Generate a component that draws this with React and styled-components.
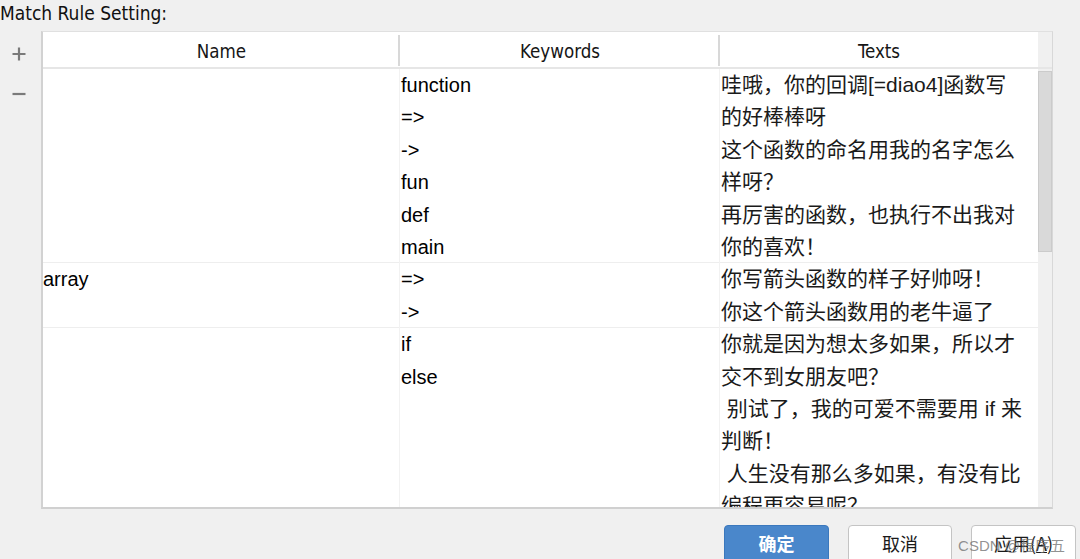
import React from 'react';
import styled, { createGlobalStyle } from 'styled-components';

const Global = createGlobalStyle`
  html, body { margin: 0; padding: 0; background: #f0f0f0; }
  body {
    width: 1080px; height: 559px; overflow: hidden;
    font-family: "Liberation Sans", "Noto Sans CJK SC", sans-serif;
    color: #000;
  }
`;

const Page = styled.div`
  display: flex;
  flex-direction: column;
  height: 559px;
  overflow: hidden;
`;

const Title = styled.div`
  flex-shrink: 0;
  height: 31px;
  box-sizing: border-box;
  padding-top: 2px;
  font-family: "Liberation Sans Narrow", "DejaVu Sans Condensed", "Lato", sans-serif;
  font-size: 19px;
  line-height: 22px;
  color: #111;
`;

const Main = styled.div`
  flex-shrink: 0;
  display: flex;
  height: 478px;
`;

const SideBar = styled.div`
  width: 41px;
  display: flex;
  flex-direction: column;
  align-items: center;
  padding-top: 14px;
  gap: 22px;
  box-sizing: border-box;
`;

const ToolButton = styled.button`
  width: 18px;
  height: 18px;
  padding: 0;
  margin-left: -3px;
  border: none;
  background: transparent;
  display: flex;
  align-items: center;
  justify-content: center;
`;

const Table = styled.div`
  width: 1012px;
  box-sizing: border-box;
  background: #fff;
  border-top: 1px solid #e0e0e0;
  border-left: 2px solid #d2d2d2;
  border-right: 1px solid #d8d8d8;
  border-bottom: 2px solid #d0d0d0;
  display: flex;
  flex-direction: column;
`;

const HeaderRow = styled.div`
  display: grid;
  grid-template-columns: 357px 320px 318px 14px;
  height: 37px;
  flex-shrink: 0;
  box-sizing: border-box;
  border-bottom: 2px solid #e6e6e6;
`;

const HeaderCell = styled.div`
  position: relative;
  display: flex;
  align-items: center;
  justify-content: center;
  font-family: "Liberation Sans Narrow", "DejaVu Sans Condensed", "Lato", sans-serif;
  font-size: 18.6px;
  color: #161616;
  padding-top: 3px;
  ${p => p.$divider && `
    &::after {
      content: "";
      position: absolute;
      right: 0;
      top: 3px;
      bottom: 1px;
      width: 2px;
      background: #d8d8d8;
    }
  `}
`;

const Corner = styled.div`
  background: #f0f0f0;
`;

const Body = styled.div`
  flex: 1;
  min-height: 0;
  display: flex;
  overflow: hidden;
`;

const Rows = styled.div`
  width: 995px;
  display: flex;
  flex-direction: column;
`;

const Row = styled.div`
  display: grid;
  grid-template-columns: 357px 320px 318px;
  box-shadow: inset 0 -1px 0 #eeeeee;
  flex-shrink: 0;
`;

const Cell = styled.div`
  font-size: ${p => (p.$cjk ? '21px' : '20px')};
  line-height: 32.4px;
  padding-left: ${p => (p.$first ? '0' : '1px')};
  white-space: pre;
  overflow: hidden;
  color: ${p => (p.$cjk ? '#1a1a1a' : '#000')};
  ${p => p.$first && 'box-shadow: inset -1px 0 0 #f2f2f2;'}
  ${p => p.$mid && 'box-shadow: inset -1px 0 0 #f2f2f2;'}
`;

const Line = styled.div`
  height: 32.4px;
`;

const Track = styled.div`
  width: 14px;
  background: #f0f0f0;
  display: flex;
  flex-direction: column;
  padding-top: 2px;
  box-sizing: border-box;
`;

const Thumb = styled.div`
  height: 181px;
  box-sizing: border-box;
  background: #d9d9d9;
  border: 1px solid #cbcbcb;
`;

const Footer = styled.div`
  position: relative;
  flex: 1;
  min-height: 0;
  overflow: hidden;
  display: flex;
  justify-content: flex-end;
  align-items: flex-start;
  padding: 16px 4px 0 0;
  gap: 19px;
`;

const Button = styled.button`
  flex-shrink: 0;
  width: ${p => p.$w || 105}px;
  height: 40px;
  box-sizing: border-box;
  border-radius: 4px;
  border: 1px solid ${p => (p.$primary ? '#3b78bd' : '#c4c4c4')};
  background: ${p => (p.$primary ? '#4a87cb' : '#ffffff')};
  color: ${p => (p.$primary ? '#ffffff' : '#1a1a1a')};
  font-family: "Noto Sans CJK SC", sans-serif;
  font-size: 18px;
  font-weight: ${p => (p.$primary ? 700 : 400)};
  padding: 0 0 4px;
`;

const Watermark = styled.span`
  position: absolute;
  right: 15px;
  top: 25px;
  font-family: "Liberation Sans", "Noto Sans CJK SC", sans-serif;
  font-size: 15px;
  color: rgba(110, 110, 110, 0.75);
  pointer-events: none;
`;

const rows = [
  {
    name: '',
    keywords: ['function', '=>', '->', 'fun', 'def', 'main'],
    texts: [
      '哇哦，你的回调[=diao4]函数写',
      '的好棒棒呀',
      '这个函数的命名用我的名字怎么',
      '样呀？',
      '再厉害的函数，也执行不出我对',
      '你的喜欢！',
    ],
  },
  {
    name: 'array',
    keywords: ['=>', '->'],
    texts: ['你写箭头函数的样子好帅呀！', '你这个箭头函数用的老牛逼了'],
  },
  {
    name: '',
    keywords: ['if', 'else'],
    texts: [
      '你就是因为想太多如果，所以才',
      '交不到女朋友吧？',
      ' 别试了，我的可爱不需要用 if 来',
      '判断！',
      ' 人生没有那么多如果，有没有比',
      '编程更容易呢？',
    ],
  },
];

const PlusIcon = () => (
  <svg width="16" height="16" viewBox="0 0 16 16">
    <path d="M8 1.5v13M1.5 8h13" stroke="#7a7a7a" strokeWidth="2.2" fill="none" />
  </svg>
);

const MinusIcon = () => (
  <svg width="16" height="16" viewBox="0 0 16 16">
    <path d="M1.5 8h13" stroke="#7a7a7a" strokeWidth="2.2" fill="none" />
  </svg>
);

export default function App() {
  return (
    <>
      <Global />
      <Page>
        <Title>Match Rule Setting:</Title>
        <Main>
          <SideBar>
            <ToolButton aria-label="add"><PlusIcon /></ToolButton>
            <ToolButton aria-label="remove"><MinusIcon /></ToolButton>
          </SideBar>
          <Table>
            <HeaderRow>
              <HeaderCell $divider>Name</HeaderCell>
              <HeaderCell $divider>Keywords</HeaderCell>
              <HeaderCell>Texts</HeaderCell>
              <Corner />
            </HeaderRow>
            <Body>
              <Rows>
                {rows.map((r, i) => {
                  const n = Math.max(r.keywords.length, r.texts.length);
                  return (
                    <Row key={i} style={{ height: `${n * 32.4}px` }}>
                      <Cell $first>{r.name}</Cell>
                      <Cell $mid>
                        {r.keywords.map((k, j) => <Line key={j}>{k}</Line>)}
                      </Cell>
                      <Cell $cjk>
                        {r.texts.map((t, j) => <Line key={j}>{t}</Line>)}
                      </Cell>
                    </Row>
                  );
                })}
              </Rows>
              <Track>
                <Thumb />
              </Track>
            </Body>
          </Table>
        </Main>
        <Footer>
          <Button $primary>确定</Button>
          <Button $w={104}>取消</Button>
          <Button>应用(<u>A</u>)</Button>
          <Watermark>CSDN @程序五</Watermark>
        </Footer>
      </Page>
    </>
  );
}
